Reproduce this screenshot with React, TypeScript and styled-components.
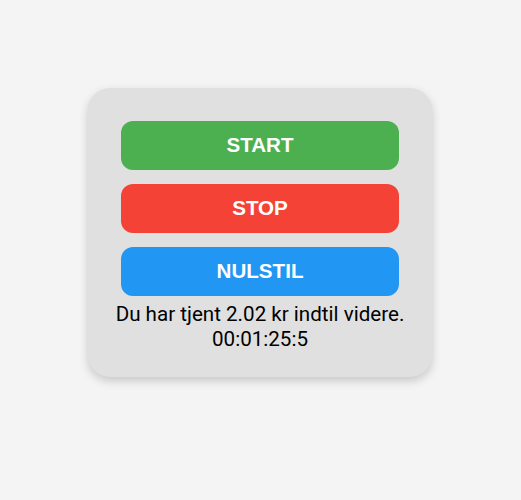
import React from "react";
import styled, { createGlobalStyle } from "styled-components";

const Global = createGlobalStyle`
  html, body { margin: 0; padding: 0; background: #f4f4f4; }
  body { font-family: Roboto, "Liberation Sans", sans-serif; }
`;

const Page = styled.div`
  width: 521px;
  height: 500px;
  display: flex;
  justify-content: flex-start;
  padding: 88px 0 0 88px;
  box-sizing: border-box;
`;

const Card = styled.div`
  width: 344px;
  height: 289px;
  box-sizing: border-box;
  background: #e0e0e0;
  border-radius: 22px;
  box-shadow: 0 4px 10px rgba(0, 0, 0, 0.18);
  padding: 33px 33px 0;
  display: flex;
  flex-direction: column;
  align-items: stretch;
`;

const Buttons = styled.div`
  display: flex;
  flex-direction: column;
  gap: 14.5px;
`;

const Button = styled.button<{ $bg: string }>`
  height: 48.5px;
  border: none;
  border-radius: 12px;
  background: ${(p) => p.$bg};
  color: #fff;
  font-family: "Liberation Sans", Arial, sans-serif;
  font-weight: bold;
  font-size: 20.6px;
  padding: 0;
  cursor: pointer;
`;

const Info = styled.div`
  margin-top: 6.5px;
  margin-left: -10px;
  margin-right: -10px;
  text-align: center;
  font-family: Roboto, sans-serif;
  font-size: 20.6px;
  line-height: 24.5px;
  color: #000;
`;

export default function App() {
  return (
    <>
      <Global />
      <Page>
        <Card>
          <Buttons>
            <Button $bg="#4caf50">START</Button>
            <Button $bg="#f44336">STOP</Button>
            <Button $bg="#2196f3">NULSTIL</Button>
          </Buttons>
          <Info>
            Du har tjent 2.02 kr indtil videre.
            <br />
            00:01:25:5
          </Info>
        </Card>
      </Page>
    </>
  );
}
